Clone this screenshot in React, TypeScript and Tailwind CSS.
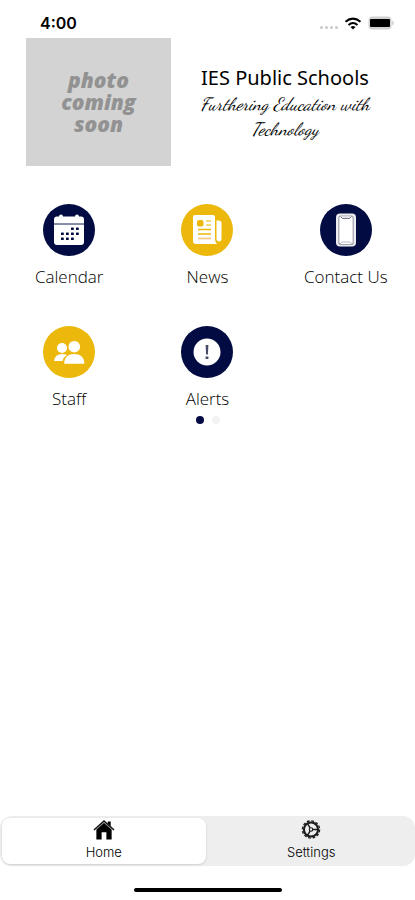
import { useState } from 'react';
import type { ReactNode } from 'react';

interface Tile {
    label: string;
    color: string;
    icon: ReactNode;
}

const NAVY = 'bg-[#020b42]';
const GOLD = 'bg-[#edb80c]';

function CalendarIcon() {
    return (
        <svg viewBox="0 0 52 52" className="w-full">
            <path d="M14 12.500h2q0-2 2-2t2 2h12q0-2 2-2t2 2h2q3 0 3 3V19H11v-3.500q0-3 3-3Z" fill="#fff" />
            <path d="M11 20.500h30V38q0 3-3 3H14q-3 0-3-3Z" fill="#fff" />
            <path d="M11 19h30v1.600H11Z" fill="#8b8fa9" />
            <g fill="#020b42">
                {[28, 33].map((x) => <rect key={x} x={x} y="23.500" width="2.800" height="2.600" rx=".600" />)}
                {[18, 23, 28, 33].map((x) => <rect key={x} x={x} y="28.500" width="2.800" height="2.600" rx=".600" />)}
                {[18, 23, 28].map((x) => <rect key={x} x={x} y="33.500" width="2.800" height="2.600" rx=".600" />)}
            </g>
        </svg>
    );
}

function NewsIcon() {
    return (
        <svg viewBox="0 0 52 52" className="w-full">
            <path d="M14 11h18q2 0 2 2v22q0 3 2 5H15q-3 0-3-3V13q0-2 2-2Z" fill="#fff" />
            <path d="M35.500 16.500h2q3 0 3 3v15q0 3-2.500 3t-2.500-3Z" fill="#fff" />
            <rect x="16" y="16" width="6.500" height="6.500" rx="2" fill="#edb80c" />
            <path d="M25 17h5M25 21h5" stroke="#f1ca55" strokeWidth="1.600" />
            <path d="M17 25.500h13M17 30h13" stroke="#edb80c" strokeWidth="1.700" />
            <path d="M17 34.500h13" stroke="#f1ca85" strokeWidth="1.700" />
        </svg>
    );
}

function PhoneIcon() {
    return (
        <svg viewBox="0 0 52 52" className="w-full">
            <rect x="16" y="9.500" width="20" height="33" rx="4" fill="#ededf0" />
            <rect x="18.800" y="12" width="14.400" height="28.500" rx="2" fill="#fff" stroke="#a0a2ae" strokeWidth="1.200" />
            <path d="M20.500 12.500l2 2h7l2-2" fill="#e6e6ea" stroke="#74778a" />
            <path d="M20 40l2-2h8l2 2" fill="none" stroke="#b9bbc4" />
        </svg>
    );
}

function StaffIcon() {
    return (
        <svg viewBox="0 0 52 52" className="w-full">
            <circle cx="19" cy="22" r="5" fill="#fff" />
            <path d="M11 35q1-7 8-7 3 0 5 1-3.500 2-4.500 6Z" fill="#fff" />
            <circle cx="31.300" cy="20.700" r="5.800" fill="#fff" />
            <path d="M21 37q1-9 10.300-9t10.200 9q0 .800-1 .800H22q-1 0-1-.800Z" fill="#fff" />
        </svg>
    );
}

function AlertIcon() {
    return (
        <svg viewBox="0 0 52 52" className="w-full">
            <circle cx="26" cy="26" r="13.500" fill="#fff" />
            <path d="M24.600 19h2.800l-.500 9.500h-1.800Z" fill="#454b68" />
            <rect x="24.600" y="30.500" width="2.800" height="2.500" fill="#454b68" />
        </svg>
    );
}

function HomeIcon() {
    return (
        <svg viewBox="0 0 24 22" className="h-[22px] w-6" aria-hidden="true">
            <path d="M16 2.500h3v5l-3-2.500Z" fill="#000" />
            <path d="M12 3.500l8 7V21.500h-5.500V14h-5v7.500H4V10.500Z" fill="#000" />
            <path d="M1.500 11.500L12 2l10.500 9.500" fill="none" stroke="#111" strokeWidth="1.600" />
            <path d="M3.500 11.400L12 3.800l8.500 7.600" fill="none" stroke="#bbb" strokeWidth=".700" />
        </svg>
    );
}

function SettingsIcon() {
    return (
        <svg viewBox="0 0 22 22" className="h-[22px] w-6" fill="none" stroke="#1c1c1c" aria-hidden="true">
            <circle cx="11" cy="11" r="9" strokeWidth="1.400" strokeDasharray="2.900 1.812" />
            <circle cx="11" cy="11" r="7.400" strokeWidth="2.200" />
            <circle cx="11" cy="11" r="1.800" strokeWidth="1.200" />
            <path d="M13 11h5M10 9.300L7.500 5M10 12.700L7.500 17" strokeWidth="1.500" />
        </svg>
    );
}

const TILES: Tile[] = [
    { label: 'Calendar', color: NAVY, icon: <CalendarIcon /> },
    { label: 'News', color: GOLD, icon: <NewsIcon /> },
    { label: 'Contact Us', color: NAVY, icon: <PhoneIcon /> },
    { label: 'Staff', color: GOLD, icon: <StaffIcon /> },
    { label: 'Alerts', color: NAVY, icon: <AlertIcon /> }
];

const TABS = [
    { label: 'Home', icon: <HomeIcon /> },
    { label: 'Settings', icon: <SettingsIcon /> }
];

function StatusBar() {
    return (
        <div className="flex h-[38px] items-center justify-between pt-2 pr-5 pl-10">
            <span className="font-['Inter',sans-serif] text-base font-semibold">4:00</span>
            <div className="flex items-center gap-1.5">
                <div className="flex gap-0.5 pt-2">
                    {[0, 1, 2, 3].map((dot) => (
                        <span key={dot} className="size-[3px] rounded-full bg-[#c9c9c9]" />
                    ))}
                </div>
                <svg viewBox="0 0 18 13" className="h-[13px] w-[18px]" fill="none" stroke="#000" strokeWidth="2">
                    <path d="M1.500 4.800Q9-1.600 16.500 4.800M4.500 7.900Q9 4 13.500 7.900" />
                    <path d="M6.500 9.900Q9 8 11.500 9.900L9 12.500Z" fill="#000" stroke="none" />
                </svg>
                <svg viewBox="0 0 27 14" className="h-[14px] w-[27px]">
                    <rect x=".500" y=".500" width="23" height="13" rx="3.500" fill="#d2d2d2" />
                    <rect x="2" y="3" width="20" height="8" rx="1" fill="#000" />
                    <path d="M24.500 4.500q2 2.500 0 5Z" fill="#aaa" />
                </svg>
            </div>
        </div>
    );
}

function App() {
    const [activeTab, setActiveTab] = useState('Home');

    return (
        <div className="flex min-h-screen flex-col bg-white font-['Open_Sans',sans-serif] text-black">
            <StatusBar />

            <header className="flex pr-4 pl-[26px]">
                <div className="flex h-32 w-[145px] shrink-0 items-center justify-center bg-[#d3d3d3] text-center text-[21px] leading-[22px] font-extrabold text-[#929292] italic">
                    <p>photo<br />coming<br />soon</p>
                </div>
                <div className="flex-1 pt-[26px] text-center">
                    <h1 className="font-['Noto_Sans',sans-serif] text-xl leading-7">IES Public Schools</h1>
                    <p className="font-['Dancing_Script','Brush_Script_MT','Liberation_Serif',cursive] text-lg leading-[25px] italic">
                        Furthering Education with<br />Technology
                    </p>
                </div>
            </header>

            <main className="flex-1 pt-[38px]">
                <nav className="grid grid-cols-3 gap-y-9">
                    {TILES.map((tile) => (
                        <a key={tile.label} href="#" className="flex flex-col items-center gap-2">
                            <span className={`size-[52px] rounded-full ${tile.color}`}>{tile.icon}</span>
                            <span className="text-[17px] leading-[26px] font-light text-black">{tile.label}</span>
                        </a>
                    ))}
                </nav>
                <div className="mt-1 flex justify-center gap-2">
                    <span className="size-2 rounded-full bg-[#020b42]" />
                    <span className="size-2 rounded-full bg-[#f3f3f3]" />
                </div>
            </main>

            <div className="flex rounded-xl bg-[#eee]">
                {TABS.map((tab) => (
                    <button
                        key={tab.label}
                        onClick={() => setActiveTab(tab.label)}
                        className={`m-0.5 flex h-[46px] flex-1 flex-col items-center rounded-lg pt-px font-['Inter',sans-serif] text-[13px] leading-6 font-light text-black ${activeTab === tab.label ? 'bg-white shadow-sm' : ''}`}
                    >
                        {tab.icon}
                        {tab.label}
                    </button>
                ))}
            </div>
            <div className="flex h-[34px] items-end justify-center pb-2">
                <div className="h-1 w-[148px] rounded-full bg-black" />
            </div>
        </div>
    );
}

export default App;
